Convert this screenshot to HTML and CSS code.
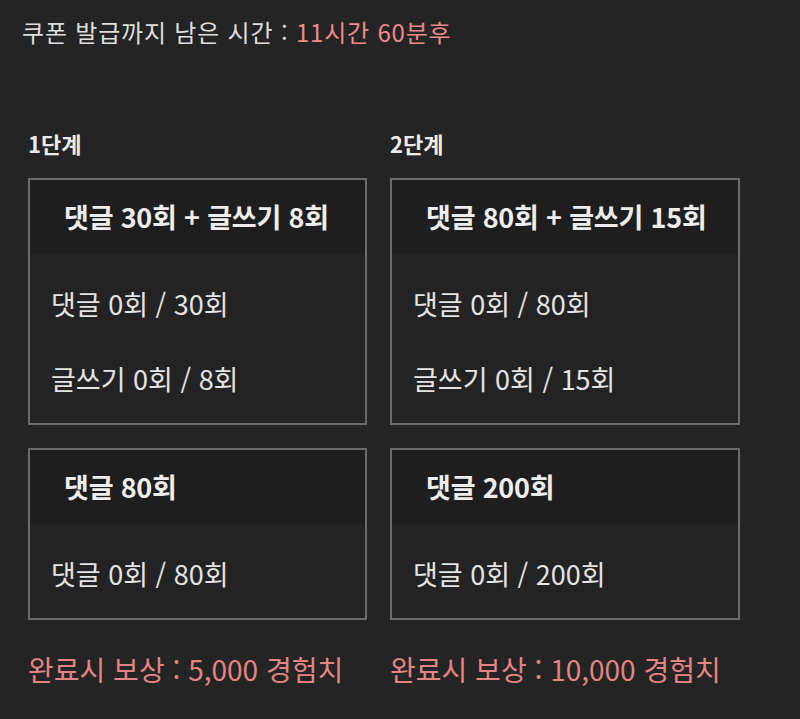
FILE: index.html
```html
<!DOCTYPE html>
<html lang="ko">
<head>
	<meta charset="UTF-8">
	<title>쿠폰 발급</title>
	<link rel="stylesheet" href="styles.css">
</head>
<body>
	<div class="wrap">
		<p class="remain">쿠폰 발급까지 남은 시간 : <span class="time">11시간 60분후</span></p>

		<div class="stages">
			<div class="stage stage1">
				<h3 class="stageName">1단계</h3>
				<div class="mission">
					<div class="missionTitle">댓글 30회 + 글쓰기 8회</div>
					<ul class="missionBody">
						<li>댓글 0회 / 30회</li>
						<li>글쓰기 0회 / 8회</li>
					</ul>
				</div>
				<div class="mission">
					<div class="missionTitle">댓글 80회</div>
					<ul class="missionBody">
						<li>댓글 0회 / 80회</li>
					</ul>
				</div>
				<p class="reward">완료시 보상 : 5,000 경험치</p>
			</div>

			<div class="stage stage2">
				<h3 class="stageName">2단계</h3>
				<div class="mission">
					<div class="missionTitle">댓글 80회 + 글쓰기 15회</div>
					<ul class="missionBody">
						<li>댓글 0회 / 80회</li>
						<li>글쓰기 0회 / 15회</li>
					</ul>
				</div>
				<div class="mission">
					<div class="missionTitle">댓글 200회</div>
					<ul class="missionBody">
						<li>댓글 0회 / 200회</li>
					</ul>
				</div>
				<p class="reward">완료시 보상 : 10,000 경험치</p>
			</div>
		</div>
	</div>
</body>
</html>
```

FILE: styles.css
```css
*{
	margin: 0;
	padding: 0;
}
li{
	list-style: none;
}
html, body{
	height: 100%;
	background-color: #242424;
}
body{
	font-family: "Noto Sans CJK KR", "Noto Sans", sans-serif;
	color: #e6e6e6;
}
.wrap{
	padding: 13px 0 0 22px;
}
.remain{
	font-size: 24px;
	line-height: 38px;
	letter-spacing: 0.8px;
	color: #dedede;
}
.remain .time{
	color: #ee8a8a;
}
.stages{
	display: grid;
	grid-template-columns: 339px 350px;
	column-gap: 23px;
	margin: 77px 0 0 6px;
}
.stage{
	display: flex;
	flex-direction: column;
	gap: 23px;
}
.stageName{
	font-size: 22px;
	font-weight: 700;
	line-height: 30px;
	color: #ececec;
	margin-bottom: -3px;
}
.mission{
	border: 2px solid #6b6b6b;
	background-color: #232323;
}
.missionTitle{
	height: 74px;
	line-height: 74px;
	padding-left: 34px;
	font-size: 27px;
	font-weight: 700;
	letter-spacing: -0.2px;
	background-color: #1e1e1e;
	color: #ededed;
}
.missionBody{
	padding: 12px 0 7px 21px;
}
.missionBody li{
	height: 75px;
	line-height: 75px;
	font-size: 27px;
	color: #e4e4e4;
}
.reward{
	font-size: 28px;
	line-height: 40px;
	color: #e38484;
	margin-top: 6px;
	white-space: nowrap;
}
```
